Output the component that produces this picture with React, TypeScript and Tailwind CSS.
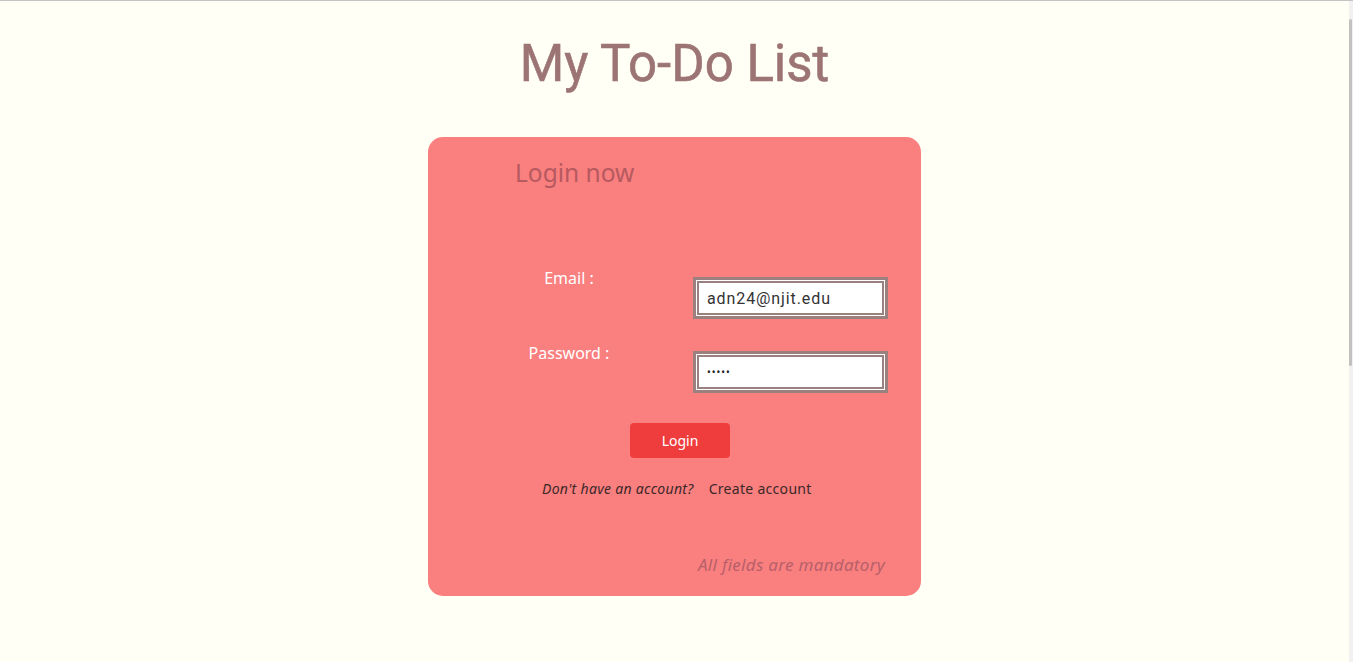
export default function App() {
  return (
    <div className="flex h-screen overflow-hidden border-t border-[#c4c4c4] bg-[#fffff5] font-['Noto_Sans',sans-serif]">
      <main className="flex flex-1 flex-col items-center">
        <h1 className="mt-[30px] font-['Roboto',sans-serif] text-[51px] leading-[66px] text-[#9c7474] [-webkit-text-stroke:0.6px_#9c7474]">
          My To-Do List
        </h1>

        <section className="mt-[40px] flex h-[459px] w-[493px] flex-col rounded-[15px] bg-[#fa7f7f]">
          <h2 className="ml-[87px] mt-[19px] text-[24.5px] leading-[34px] text-[#b65a60]">
            Login now
          </h2>

          <form className="ml-[66px] mt-[78px] grid grid-cols-[150px_195px] gap-x-[49px] gap-y-[24px]">
            <label className="text-center text-[16px] leading-[20px] text-white">
              Email :
            </label>
            <div className="mt-[9px] h-[42px] w-[195px] border-[3px] border-[#9b8080] bg-white p-[1px]">
              <input
                type="email"
                defaultValue="adn24@njit.edu"
                className="h-full w-full border-2 border-[#9b8080] px-[8px] font-['Roboto',sans-serif] text-[16px] tracking-[0.9px] text-[#333] outline-none"
              />
            </div>
            <label className="text-center text-[16px] leading-[20px] text-white">
              Password :
            </label>
            <div className="mt-[8px] h-[42px] w-[195px] border-[3px] border-[#9b8080] bg-white p-[1px]">
              <input
                type="password"
                defaultValue="abcde"
                className="h-full w-full border-2 border-[#9b8080] px-[8px] text-[10px] tracking-[1px] text-[#222] outline-none"
              />
            </div>
          </form>

          <button className="ml-[202px] mt-[30px] h-[35px] w-[100px] rounded-[4px] bg-[#ef3d3d] text-[14px] text-white">
            Login
          </button>

          <p className="ml-[114px] mt-[21px] flex gap-[15px] text-[14px] leading-[20px] tracking-[0.3px] text-[#3b2828]">
            <span className="italic">Don't have an account?</span>
            <span>Create account</span>
          </p>

          <p className="mr-[36px] mt-auto mb-[20px] self-end text-[17px] italic leading-[22px] tracking-[0.3px] text-[#b8606a]">
            All fields are mandatory
          </p>
        </section>
      </main>

      <aside className="flex w-[4px] flex-col bg-[#f1f1f1] pt-[18px]">
        <div className="h-[347px] w-[3px] rounded-full bg-[#c1c1c1]" />
      </aside>
    </div>
  );
}
